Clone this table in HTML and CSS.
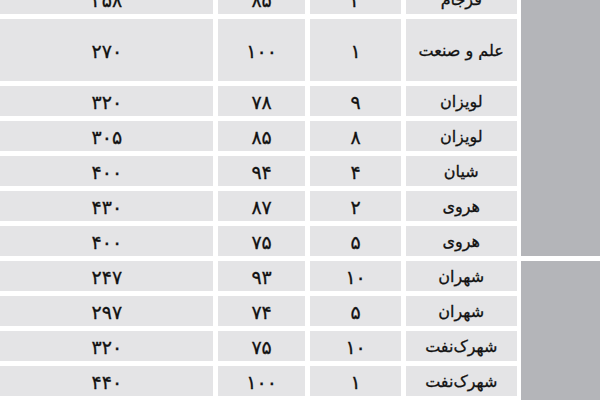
FILE: index.html
```html
<!DOCTYPE html>
<html lang="fa" dir="rtl">
<head>
<meta charset="utf-8">
<title>جدول</title>
<link rel="stylesheet" href="styles.css">
</head>
<body>
<div class="table">
  <div class="side side-a"></div>
  <div class="side side-b"></div>

  <div class="cell name">فرجام</div><div class="cell">۲</div><div class="cell">۸۵</div><div class="cell">۲۵۸</div>
  <div class="cell name">علم و صنعت</div><div class="cell">۱</div><div class="cell">۱۰۰</div><div class="cell">۲۷۰</div>
  <div class="cell name">لویزان</div><div class="cell">۹</div><div class="cell">۷۸</div><div class="cell">۳۲۰</div>
  <div class="cell name">لویزان</div><div class="cell">۸</div><div class="cell">۸۵</div><div class="cell">۳۰۵</div>
  <div class="cell name">شیان</div><div class="cell">۴</div><div class="cell">۹۴</div><div class="cell">۴۰۰</div>
  <div class="cell name">هروی</div><div class="cell">۲</div><div class="cell">۸۷</div><div class="cell">۴۳۰</div>
  <div class="cell name">هروی</div><div class="cell">۵</div><div class="cell">۷۵</div><div class="cell">۴۰۰</div>
  <div class="cell name">شهران</div><div class="cell">۱۰</div><div class="cell">۹۳</div><div class="cell">۲۴۷</div>
  <div class="cell name">شهران</div><div class="cell">۵</div><div class="cell">۷۴</div><div class="cell">۲۹۷</div>
  <div class="cell name">شهرک‌نفت</div><div class="cell">۱۰</div><div class="cell">۷۵</div><div class="cell">۳۲۰</div>
  <div class="cell name">شهرک‌نفت</div><div class="cell">۱</div><div class="cell">۱۰۰</div><div class="cell">۴۴۰</div>
</div>
</body>
</html>
```

FILE: styles.css
```css
html, body {
  margin: 0;
  padding: 0;
  background: #ffffff;
  overflow: hidden;
}

body {
  width: 600px;
  height: 400px;
  font-family: "DejaVu Sans", sans-serif;
  color: #111111;
}

.table {
  direction: rtl;
  display: grid;
  grid-template-columns: 79px 110.7px 91.7px 87.4px 213.3px;
  grid-template-rows: 30px 62px repeat(10, 30px);
  column-gap: 4.45px;
  row-gap: 5px;
  margin-top: -16px;
  width: 600px;
}

.side {
  background: #b4b5b9;
  grid-column: 1;
}

.side-a {
  grid-row: 1 / span 7;
}

.side-b {
  grid-row: 8 / span 5;
}

.cell {
  background: #e4e4e6;
  display: flex;
  align-items: center;
  justify-content: center;
  font-size: 19px;
  line-height: 1;
  padding-top: 2px;
  box-sizing: border-box;
  -webkit-text-stroke: 0.3px #111111;
}

.name {
  font-size: 16px;
}
```
